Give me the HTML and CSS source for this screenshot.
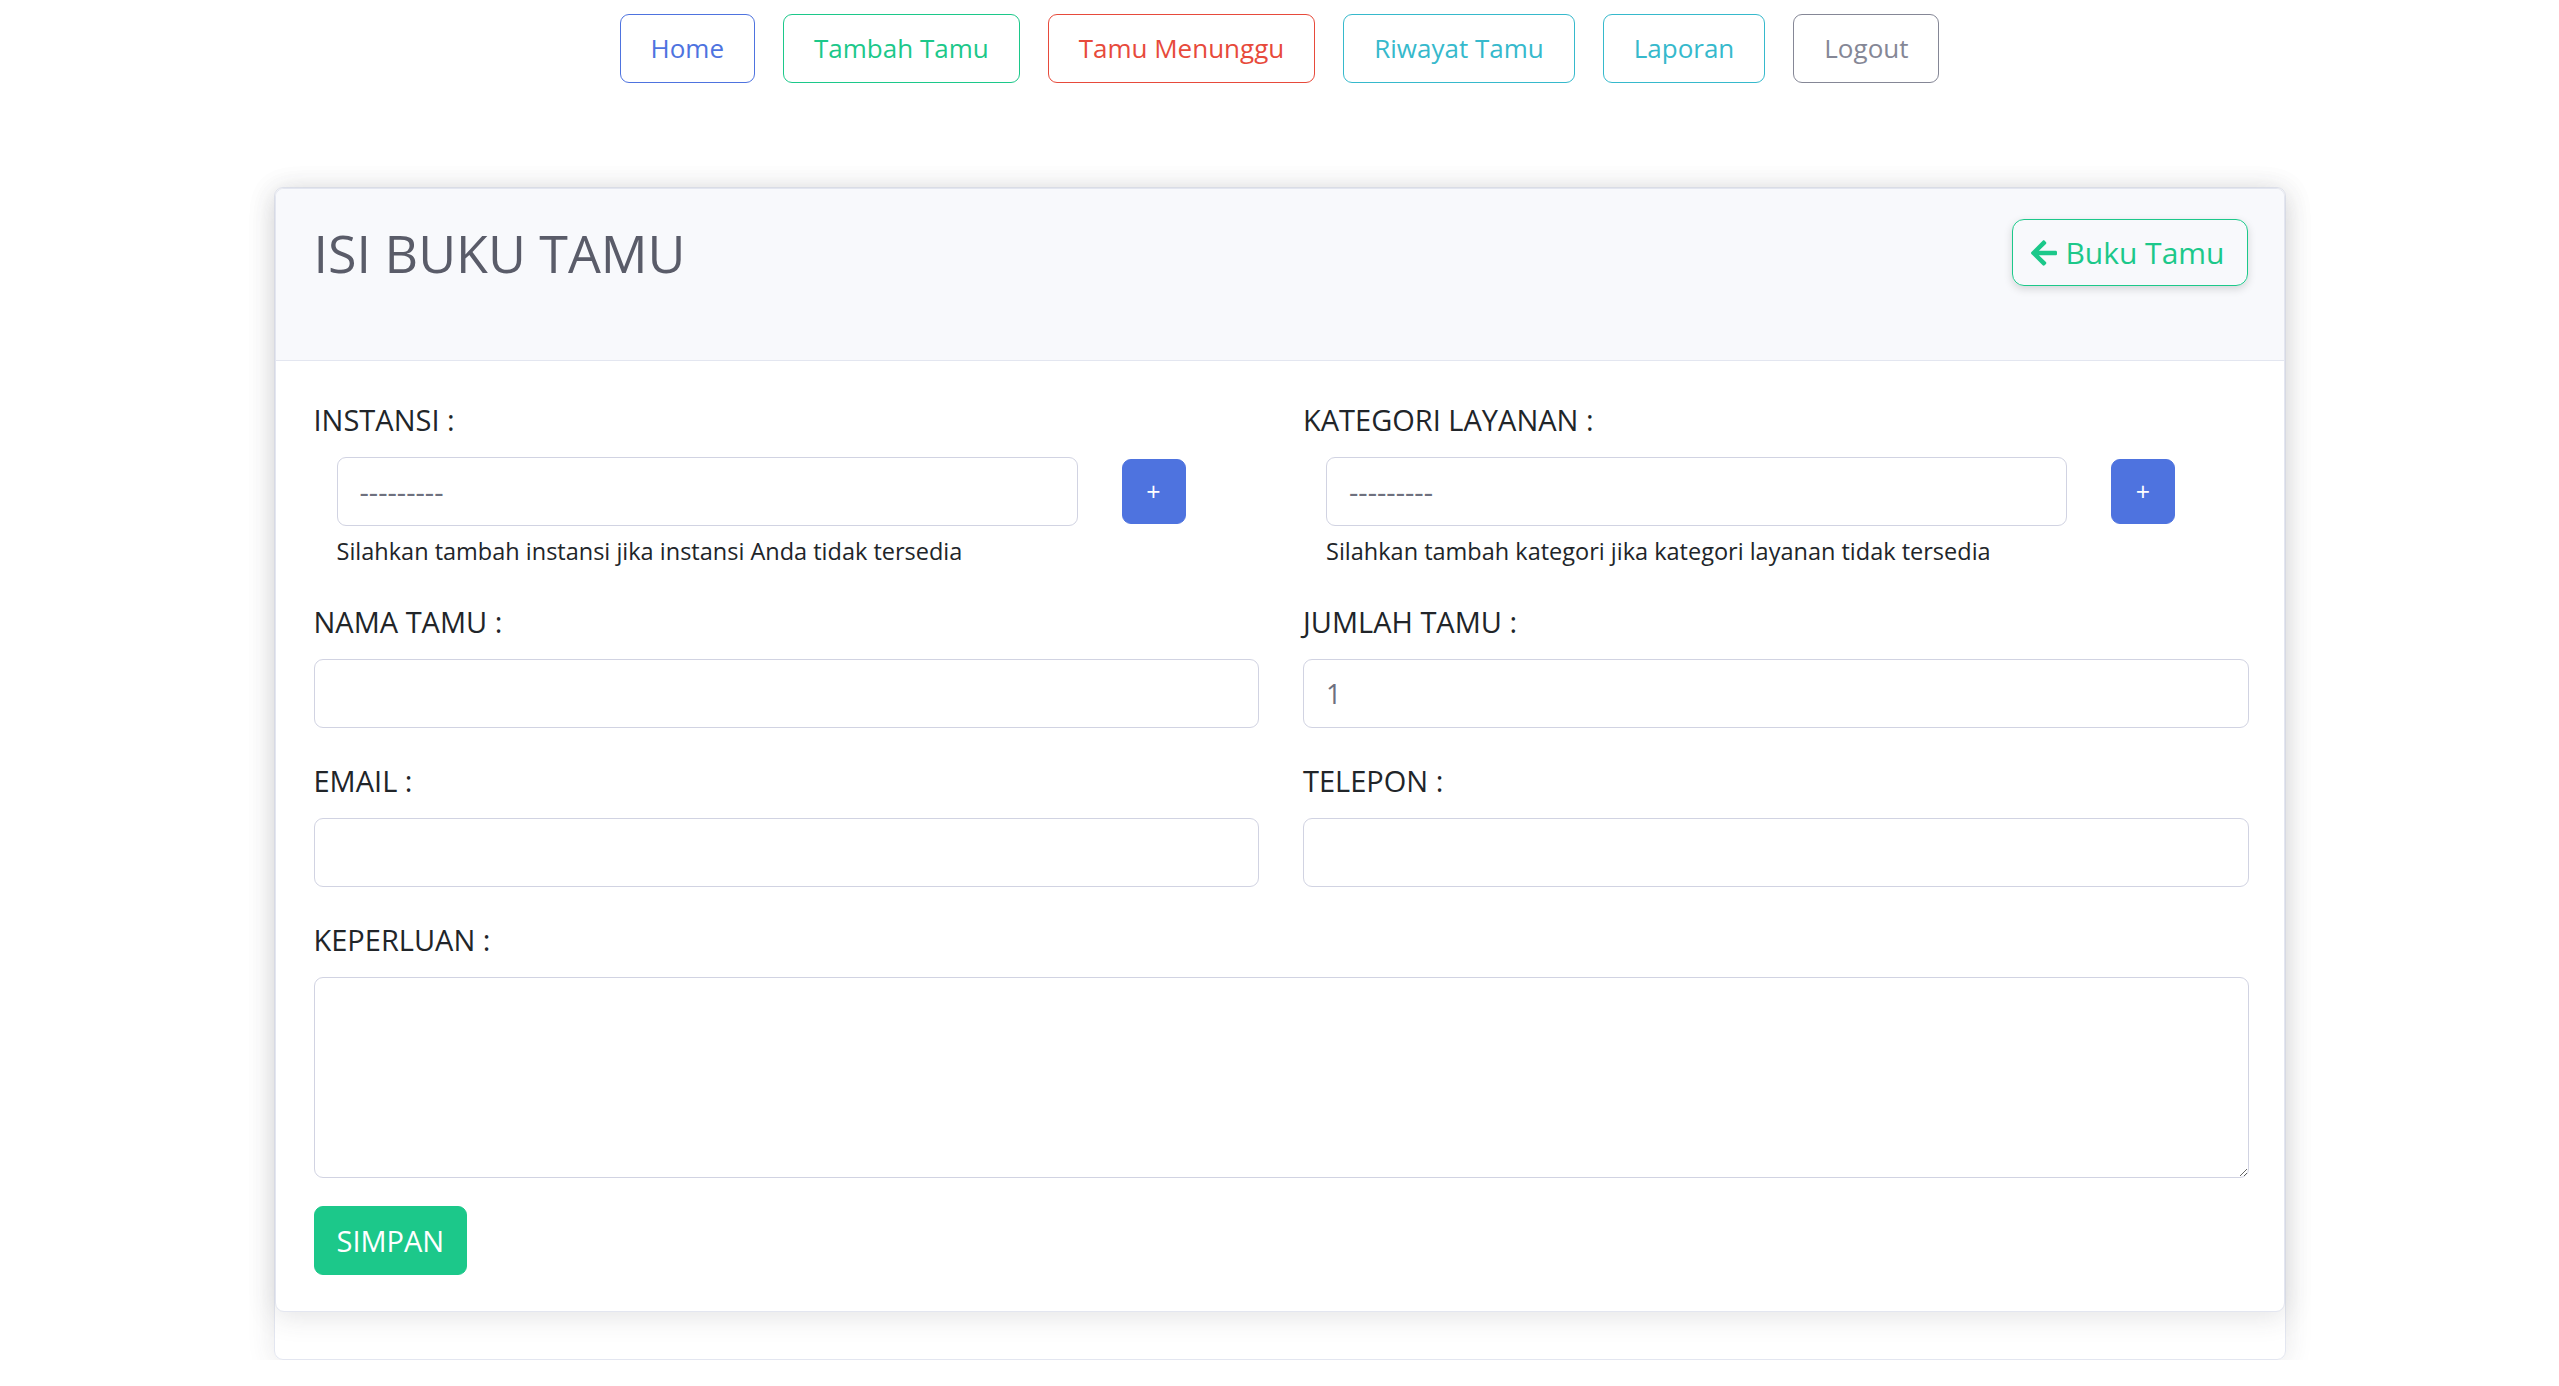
FILE: index.html
```html
<!DOCTYPE html>
<html lang="id">
<head>
<meta charset="utf-8">
<title>Isi Buku Tamu</title>
<link rel="stylesheet" href="styles.css">
</head>
<body>
<nav class="topnav">
  <a class="navbtn nb-primary" href="#">Home</a>
  <a class="navbtn nb-success" href="#">Tambah Tamu</a>
  <a class="navbtn nb-danger" href="#">Tamu Menunggu</a>
  <a class="navbtn nb-info" href="#">Riwayat Tamu</a>
  <a class="navbtn nb-info" href="#">Laporan</a>
  <a class="navbtn nb-secondary" href="#">Logout</a>
</nav>

<div class="frame">
  <div class="card">
    <div class="card-header">
      <h2 class="title">ISI BUKU TAMU</h2>
      <a class="back-btn" href="#"><svg class="arrow" viewBox="0 0 448 512" width="26" height="30"><path fill="currentColor" d="M257.5 445.1l-22.2 22.2c-9.4 9.4-24.6 9.4-33.9 0L7 273c-9.4-9.4-9.4-24.6 0-33.9L201.4 44.7c9.4-9.4 24.6-9.4 33.9 0l22.2 22.2c9.5 9.5 9.3 25-.4 34.3L136.6 216H424c13.3 0 24 10.7 24 24v32c0 13.3-10.7 24-24 24H136.6l120.5 114.8c9.8 9.3 10 24.8.4 34.3z"/></svg>Buku Tamu</a>
    </div>
    <form class="card-body">
      <div class="grid">
        <div class="group">
          <label class="lbl">INSTANSI :</label>
          <div class="select-row">
            <select class="control select"><option>---------</option></select>
            <button type="button" class="plus">+</button>
          </div>
          <div class="help">Silahkan tambah instansi jika instansi Anda tidak tersedia</div>
        </div>
        <div class="group">
          <label class="lbl">KATEGORI LAYANAN :</label>
          <div class="select-row">
            <select class="control select"><option>---------</option></select>
            <button type="button" class="plus">+</button>
          </div>
          <div class="help">Silahkan tambah kategori jika kategori layanan tidak tersedia</div>
        </div>
        <div class="group">
          <label class="lbl">NAMA TAMU :</label>
          <input class="control" type="text">
        </div>
        <div class="group">
          <label class="lbl">JUMLAH TAMU :</label>
          <input class="control" type="number" value="1">
        </div>
        <div class="group">
          <label class="lbl">EMAIL :</label>
          <input class="control" type="email">
        </div>
        <div class="group">
          <label class="lbl">TELEPON :</label>
          <input class="control" type="text">
        </div>
      </div>
      <div class="group">
        <label class="lbl">KEPERLUAN :</label>
        <textarea class="control area"></textarea>
      </div>
      <button type="submit" class="save">SIMPAN</button>
    </form>
  </div>
</div>
</body>
</html>
```

FILE: styles.css
```css
* { box-sizing: border-box; }

body {
  margin: 0;
  background: #ffffff;
  font-family: "Open Sans", "Liberation Sans", sans-serif;
  color: #212529;
}

.topnav {
  display: flex;
  justify-content: center;
  gap: 28px;
  padding-top: 14px;
}

.navbtn {
  display: block;
  font-size: 26px;
  line-height: 39px;
  padding: 14px 30px;
  border: 1px solid;
  border-radius: 9px;
  text-decoration: none;
  background: #fff;
}
.nb-primary { color: #4e73df; border-color: #4e73df; }
.nb-success { color: #1cc88a; border-color: #1cc88a; }
.nb-danger { color: #e74a3b; border-color: #e74a3b; }
.nb-info { color: #36b9cc; border-color: #36b9cc; }
.nb-secondary { color: #858796; border-color: #858796; }

.frame {
  width: 2012px;
  margin: 104px auto 0;
  border: 1px solid #e3e6f0;
  border-radius: 9px;
  padding-bottom: 47px;
  box-shadow: 0 4px 28px rgba(58, 59, 69, 0.12);
}

.card {
  border: 1px solid #e3e6f0;
  border-radius: 9px;
  background: #fff;
  box-shadow: 0 4px 28px rgba(58, 59, 69, 0.15);
  overflow: hidden;
}

.card-header {
  display: flex;
  justify-content: space-between;
  align-items: flex-start;
  background: #f8f9fc;
  border-bottom: 1px solid #e3e6f0;
  padding: 30px 36px 74px 38px;
}

.title {
  margin: 3px 0 0;
  font-size: 52px;
  line-height: 62px;
  font-weight: 400;
  color: #5a5c69;
}

.back-btn {
  display: flex;
  align-items: center;
  font-size: 30px;
  line-height: 45px;
  padding: 10px 22px 10px 18px;
  color: #1cc88a;
  border: 1px solid #1cc88a;
  border-radius: 12px;
  text-decoration: none;
  box-shadow: 0 3px 8px rgba(0, 0, 0, 0.15);
}
.arrow { margin-right: 8px; }

.card-body {
  display: block;
  padding: 37px 35px 36px 38px;
}

.grid {
  display: grid;
  grid-template-columns: 1fr 1fr;
  column-gap: 44px;
}

.group {
  display: flex;
  flex-direction: column;
  margin-bottom: 31px;
}

.lbl {
  font-size: 29px;
  line-height: 43px;
  margin-bottom: 16px;
  color: #212529;
}

.control {
  display: block;
  width: 100%;
  height: 69px;
  font-family: inherit;
  font-size: 27px;
  color: #6e707e;
  padding: 10px 22px;
  background: #fff;
  border: 1px solid #d1d3e2;
  border-radius: 9px;
  outline: none;
}

.select-row {
  display: flex;
  align-items: center;
  gap: 44px;
  padding-left: 23px;
}

.select {
  width: 741px;
  flex: none;
  appearance: none;
  -webkit-appearance: none;
  font-size: 29px;
}

.plus {
  width: 64px;
  height: 65px;
  flex: none;
  background: #4e73df;
  border: 1px solid #4e73df;
  border-radius: 9px;
  color: #fff;
  font-family: inherit;
  font-size: 25px;
  line-height: 1;
  padding: 0;
}

.help {
  margin-top: 8px;
  padding-left: 23px;
  font-size: 23.5px;
  line-height: 35px;
  color: #212529;
}

.area {
  height: 201px;
  resize: vertical;
}

.save {
  display: block;
  font-family: inherit;
  font-size: 29px;
  line-height: 43px;
  padding: 12px 22px;
  color: #fff;
  background: #1cc88a;
  border: 1px solid #1cc88a;
  border-radius: 9px;
  margin-top: -3px;
}
```
